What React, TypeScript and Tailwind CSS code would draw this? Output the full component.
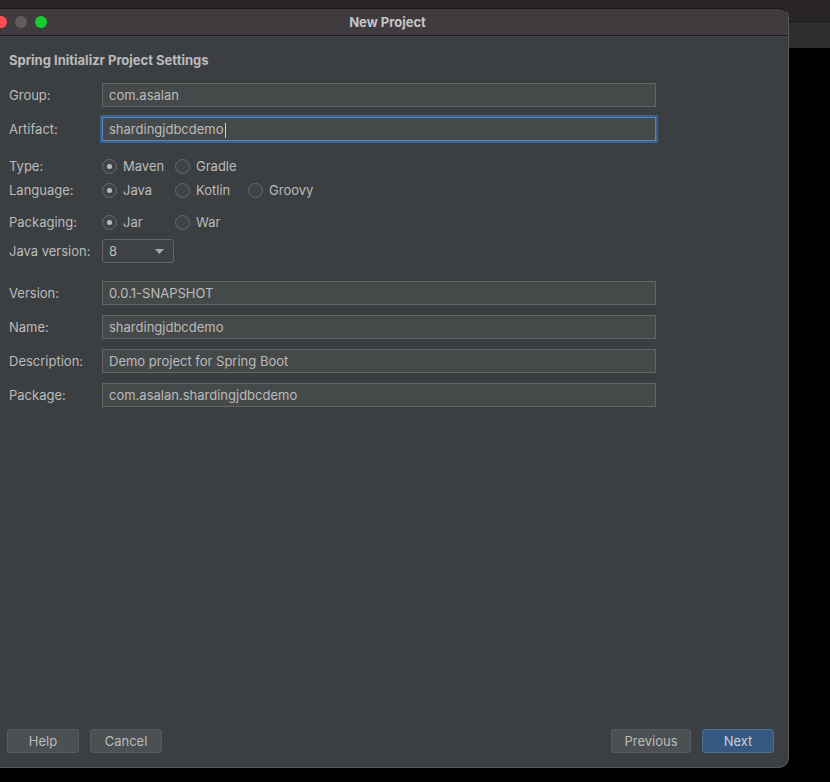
import React from 'react'

const font = { fontFamily: 'Inter, "Liberation Sans", sans-serif' }

function Row({ label, className = '', children }: { label: string; className?: string; children: React.ReactNode }) {
  return (
    <div className={`flex items-center ${className}`}>
      <div className="w-[93px] shrink-0 pt-[2px] text-[13px] text-[#bbbbbb]">{label}</div>
      {children}
    </div>
  )
}

function TextField({ value, focused = false }: { value: string; focused?: boolean }) {
  return (
    <div
      className={`flex h-[24px] w-[554px] items-center border bg-[#45494a] px-[6px] pt-[2px] text-[13px] text-[#bbbbbb] ${
        focused ? 'border-[#5886b6] ring-2 ring-[#3a6291]' : 'border-[#646464]'
      }`}
    >
      <span>{value}</span>
      {focused && <span className="ml-px h-[15px] w-px bg-[#cfcfcf]" />}
    </div>
  )
}

function Radio({ label, checked = false }: { label: string; checked?: boolean }) {
  return (
    <div className="flex w-[73px] items-center gap-[6px]">
      <span className="flex h-[15px] w-[15px] items-center justify-center rounded-full border border-[#6b6b6b] bg-[#404345]">
        {checked && <span className="h-[5px] w-[5px] rounded-full bg-[#bbbbbb]" />}
      </span>
      <span className="pt-[2px] text-[13px] text-[#bbbbbb]">{label}</span>
    </div>
  )
}

function Button({ label, primary = false, className = '' }: { label: string; primary?: boolean; className?: string }) {
  return (
    <button
      type="button"
      className={`flex h-[24px] items-center justify-center rounded-[3px] border pt-[2px] text-[13px] ${
        primary
          ? 'border-[#4a6f95] bg-[#365880] text-[#c8d0da]'
          : 'border-[#5a5d5f] bg-[#4c5052] text-[#bbbbbb]'
      } ${className}`}
    >
      {label}
    </button>
  )
}

export default function App() {
  return (
    <div
      className="flex h-[782px] w-[830px] overflow-hidden bg-[linear-gradient(to_bottom,#2a2528_21px,#000_21px)]"
      style={font}
    >
      <div className="mt-[8px] flex w-[789px] shrink-0 flex-col">
        <div className="flex h-[760px] flex-col overflow-hidden rounded-r-[10px] border-t border-r border-b border-t-[#1c191a] border-r-[#56585a] border-b-[#56585a] bg-[#3c3f41]">
          {/* title bar */}
          <div className="relative flex h-[27px] shrink-0 items-center border-b border-[#1b1b1b] bg-[#3f3b3e]">
            <div className="absolute left-[-5px] top-[7px] flex gap-[8px]">
              <span className="h-[12px] w-[12px] rounded-full bg-[#fd4f57]" />
              <span className="h-[12px] w-[12px] rounded-full bg-[#5f5d60]" />
              <span className="h-[12px] w-[12px] rounded-full bg-[#14cc32]" />
            </div>
            <div className="flex-1 pr-[13px] pt-px text-center text-[13px] font-bold text-[#c6c4c6]">New Project</div>
          </div>

          {/* body */}
          <div className="flex flex-1 flex-col pl-[9px] pr-[14px] pb-[14px]">
            <div className="mt-[16px] text-[13px] font-bold leading-[16px] text-[#bbbbbb]">
              Spring Initializr Project Settings
            </div>

            <Row label="Group:" className="mt-[15px] h-[24px]">
              <TextField value="com.asalan" />
            </Row>
            <Row label="Artifact:" className="mt-[10px] h-[24px]">
              <TextField value="shardingjdbcdemo" focused />
            </Row>

            <Row label="Type:" className="mt-[15px] h-[20px]">
              <Radio label="Maven" checked />
              <Radio label="Gradle" />
            </Row>
            <Row label="Language:" className="mt-[4px] h-[20px]">
              <Radio label="Java" checked />
              <Radio label="Kotlin" />
              <Radio label="Groovy" />
            </Row>
            <Row label="Packaging:" className="mt-[12px] h-[20px]">
              <Radio label="Jar" checked />
              <Radio label="War" />
            </Row>
            <Row label="Java version:" className="mt-[7px] h-[24px]">
              <div className="flex h-[24px] w-[72px] items-center justify-between rounded-[3px] border border-[#646464] bg-[#3e4244] pl-[6px] pr-[9px] text-[13px] text-[#bbbbbb]">
                <span className="pt-[2px]">8</span>
                <svg width="9" height="5" viewBox="0 0 9 5">
                  <path d="M0 0h9L4.5 5z" fill="#a8a8a8" />
                </svg>
              </div>
            </Row>

            <Row label="Version:" className="mt-[18px] h-[24px]">
              <TextField value="0.0.1-SNAPSHOT" />
            </Row>
            <Row label="Name:" className="mt-[10px] h-[24px]">
              <TextField value="shardingjdbcdemo" />
            </Row>
            <Row label="Description:" className="mt-[10px] h-[24px]">
              <TextField value="Demo project for Spring Boot" />
            </Row>
            <Row label="Package:" className="mt-[10px] h-[24px]">
              <TextField value="com.asalan.shardingjdbcdemo" />
            </Row>

            {/* footer */}
            <div className="mt-auto flex items-center">
              <Button label="Help" className="ml-[-2px] w-[72px]" />
              <Button label="Cancel" className="ml-[11px] w-[72px]" />
              <div className="flex-1" />
              <Button label="Previous" className="w-[80px]" />
              <Button label="Next" primary className="ml-[11px] w-[72px]" />
            </div>
          </div>
        </div>
      </div>
      <div className="mt-[21px] h-[27px] flex-1 border-t border-[#1a1a1a] bg-[#2e2e2e]" />
    </div>
  )
}
